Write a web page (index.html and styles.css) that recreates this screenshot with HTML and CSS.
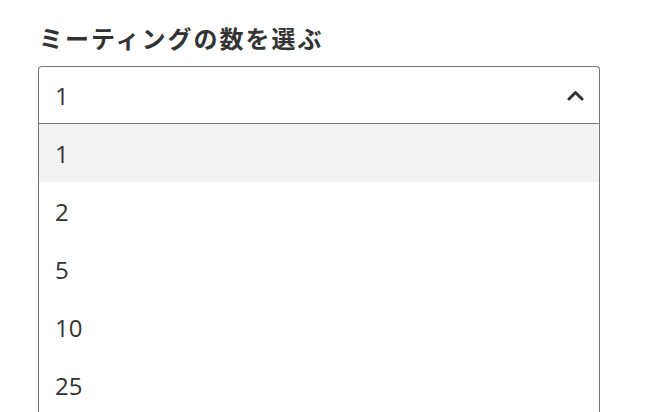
FILE: index.html
```html
<!DOCTYPE html>
<html lang="ja">
<head>
<meta charset="utf-8">
<link rel="stylesheet" href="styles.css">
</head>
<body>
<div class="field">
  <h2 class="label">ミーティングの数を選ぶ</h2>
  <div class="select">
    <div class="select-value">
      <span>1</span>
      <svg class="chev" width="17" height="11" viewBox="0 0 17 11"><polyline points="2,9 8.5,2.5 15,9" fill="none" stroke="#333" stroke-width="3" stroke-linecap="round" stroke-linejoin="round"/></svg>
    </div>
    <ul class="options">
      <li class="option active">1</li>
      <li class="option">2</li>
      <li class="option">5</li>
      <li class="option">10</li>
      <li class="option">25</li>
    </ul>
  </div>
</div>
</body>
</html>
```
FILE: styles.css
```css
html, body {
  margin: 0;
  padding: 0;
  background: #fff;
  overflow: hidden;
}
body {
  font-family: "Open Sans", "Noto Sans CJK JP", sans-serif;
  color: #333;
}
.field {
  padding: 20px 0 0 38px;
  width: 562px;
}
.label {
  margin: 0 0 11px 1px;
  font-family: "Noto Sans CJK JP", sans-serif;
  font-weight: 700;
  font-size: 24px;
  line-height: 35px;
  letter-spacing: 2px;
  color: #333;
}
.select {
  border: 1px solid #777;
  border-bottom: none;
  border-radius: 4px 4px 0 0;
}
.select-value {
  display: flex;
  align-items: center;
  justify-content: space-between;
  height: 56px;
  padding: 0 15px 0 16px;
  border-bottom: 1px solid #777;
  font-size: 24px;
}
.chev {
  display: block;
}
.options {
  list-style: none;
  margin: 0;
  padding: 0;
}
.option {
  height: 58px;
  display: flex;
  align-items: center;
  padding-left: 16px;
  font-size: 24px;
}
.option.active {
  background: #f2f2f2;
}
```
